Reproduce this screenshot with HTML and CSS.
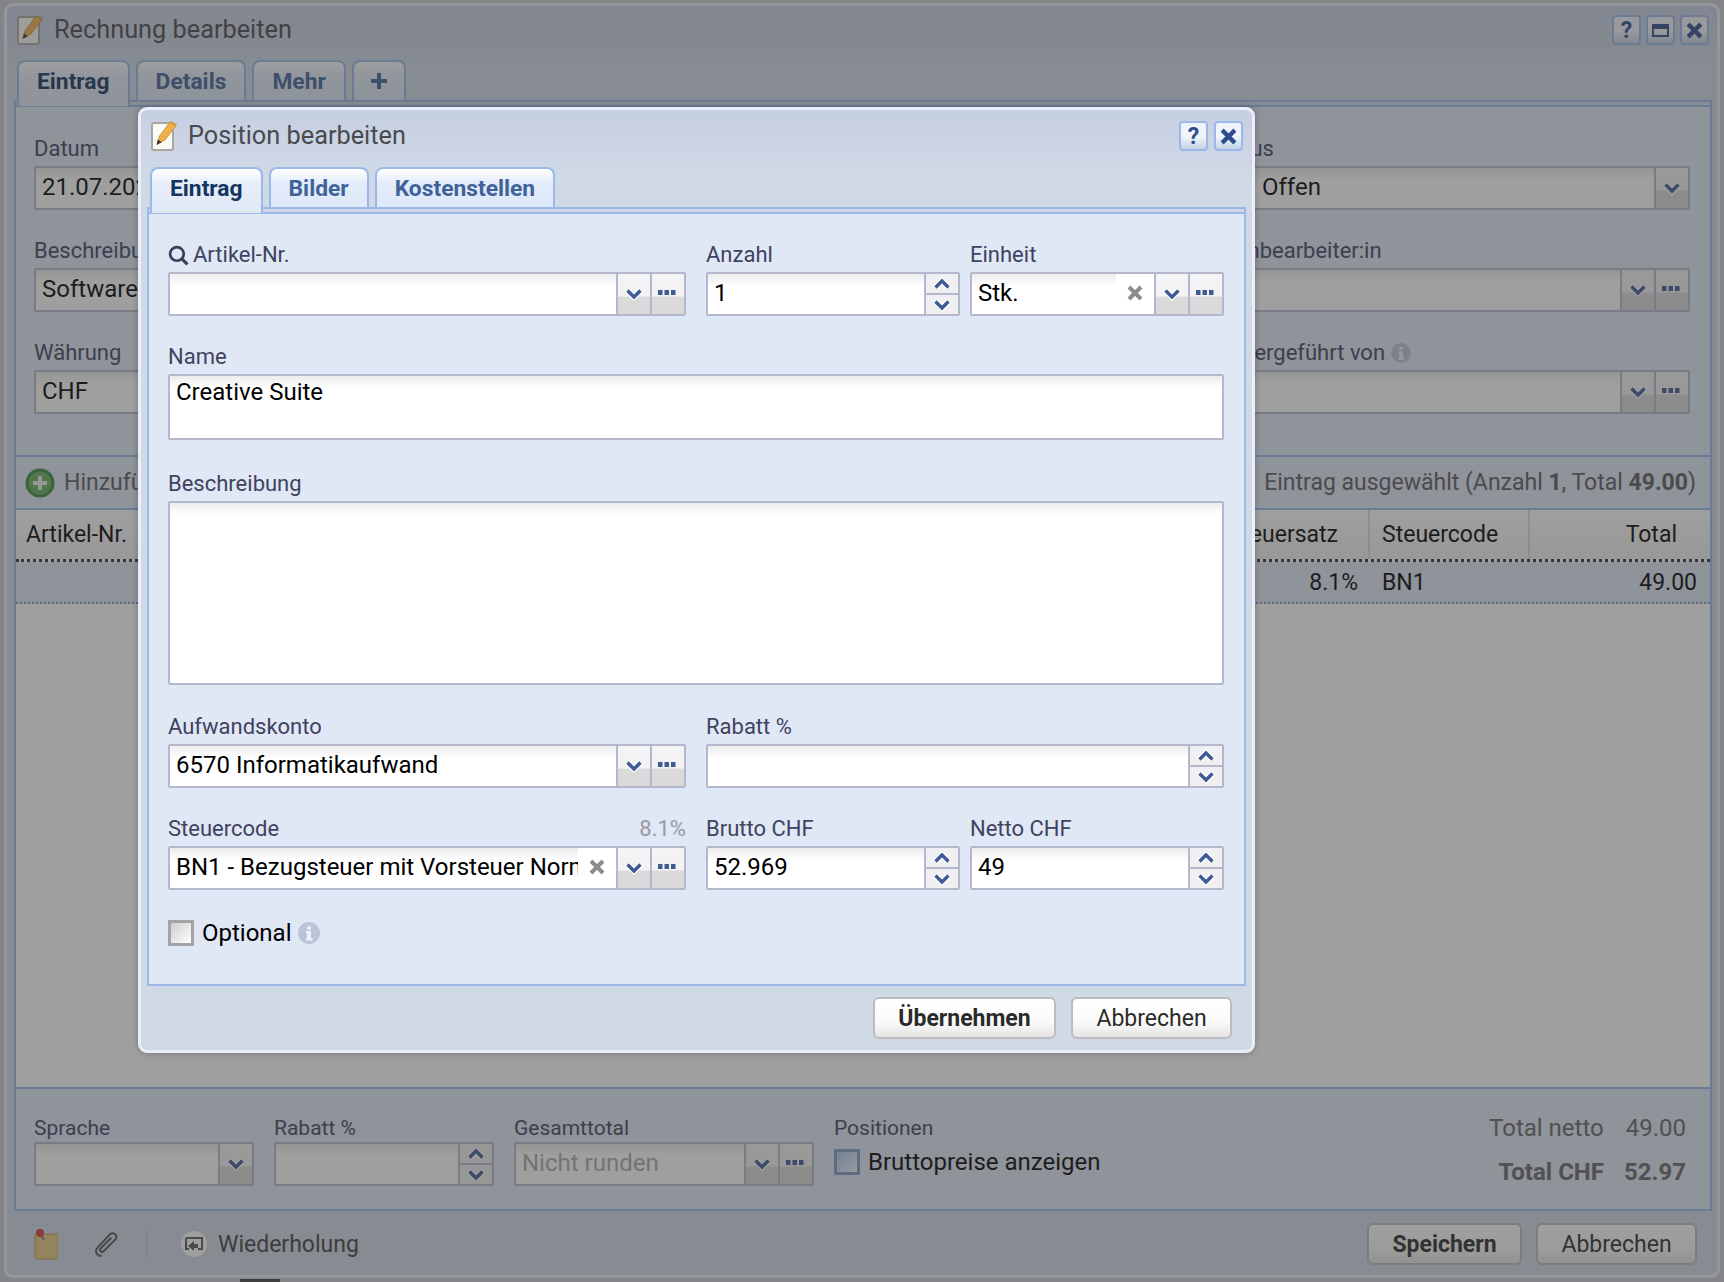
FILE: index.html
```html
<!DOCTYPE html>
<html lang="de">
<head>
    <meta charset="UTF-8">
    <title>Position bearbeiten</title>
    <link rel="stylesheet" href="styles.css">
</head>
<body>
    <svg class="sprites" width="0" height="0">
        <symbol id="i-down" viewBox="0 0 20 16"><path d="M3 4l7 7 7-7" fill="none" stroke="#fff" stroke-width="6"/><path d="M3.5 4.5l6.500 6.500 6.500-6.500" fill="none" stroke="#3f5a96" stroke-width="3.400"/></symbol>
        <symbol id="i-up" viewBox="0 0 20 16"><path d="M3 12l7-7 7 7" fill="none" stroke="#fff" stroke-width="6"/><path d="M3.500 11.500l6.500-6.500 6.500 6.500" fill="none" stroke="#3f5a96" stroke-width="3.400"/></symbol>
        <symbol id="i-more" viewBox="0 0 18 6"><path d="M0 0h4.500v5H0zM6.500 0H11v5H6.500zM13 0h4.500v5H13z" fill="#3f5a96"/></symbol>
        <symbol id="i-x" viewBox="0 0 16 16"><path d="M2 2l12 12M14 2L2 14" fill="none" stroke="currentColor" stroke-width="4"/></symbol>
        <symbol id="i-note" viewBox="0 0 26 30">
            <rect x="1" y="2" width="21" height="27" rx="2" fill="#fbfbf8" stroke="#a9a89f" stroke-width="2"/>
            <path d="M6 23l2.500-8L19 1l6 4L14 19z" fill="#eeb14a" stroke="#c98a2c" stroke-width=".8"/>
            <path d="M19 1l1.500-1L26 3l-1 2z" fill="#c9a15a"/>
            <path d="M5.500 24l1.300-5.500 4 2.700z" fill="#40382c"/>
        </symbol>
        <symbol id="i-info" viewBox="0 0 22 22"><circle cx="11" cy="11" r="11" fill="#bcc4d8"/><path d="M9 4.500h4v3H9zM8 9h5v7h1.500v2.500h-6.500V16H9v-4.500H8z" fill="#eef1f8"/></symbol>
    </svg>

    <!-- Hintergrundfenster -->
    <div class="window invoice">
        <div class="title-bar">
            <svg class="title-icon"><use href="#i-note"/></svg>
            <span class="title-text">Rechnung bearbeiten</span>
            <div class="win-buttons">
                <button class="win-btn">?</button>
                <button class="win-btn"><span class="max-glyph"></span></button>
                <button class="win-btn"><svg class="x-glyph"><use href="#i-x"/></svg></button>
            </div>
        </div>
        <div class="tabs">
            <span class="tab active">Eintrag</span>
            <span class="tab">Details</span>
            <span class="tab">Mehr</span>
            <span class="tab tab-plus"><svg width="18" height="18" viewBox="0 0 18 18"><path d="M9 1v16M1 9h16" stroke="currentColor" stroke-width="4"/></svg></span>
        </div>
        <div class="tab-strip"></div>
        <div class="invoice-panel">
            <section class="head-form">
                <div class="col">
                    <label class="label">Datum</label>
                    <div class="field"><span class="value">21.07.2023</span></div>
                </div>
                <div class="col">
                    <label class="label">Status</label>
                    <div class="field"><span class="value value-status">Offen</span><span class="fbtn"><svg class="chev"><use href="#i-down"/></svg></span></div>
                </div>
                <div class="col">
                    <label class="label">Beschreibung</label>
                    <div class="field"><span class="value">Software</span></div>
                </div>
                <div class="col">
                    <label class="label">Sachbearbeiter:in</label>
                    <div class="field"><span class="value"></span><span class="fbtn"><svg class="chev"><use href="#i-down"/></svg></span><span class="fbtn"><svg class="more"><use href="#i-more"/></svg></span></div>
                </div>
                <div class="col">
                    <label class="label">Währung</label>
                    <div class="field"><span class="value">CHF</span></div>
                </div>
                <div class="col">
                    <label class="label">Weitergeführt von <svg class="info-small"><use href="#i-info"/></svg></label>
                    <div class="field"><span class="value"></span><span class="fbtn"><svg class="chev"><use href="#i-down"/></svg></span><span class="fbtn"><svg class="more"><use href="#i-more"/></svg></span></div>
                </div>
            </section>

            <div class="grid-toolbar">
                <svg class="add-icon" viewBox="0 0 30 30">
                    <circle cx="15" cy="15" r="14.500" fill="#3d8a3d"/>
                    <circle cx="15" cy="15" r="11.500" fill="#69b05e"/>
                    <path d="M15 8v14M8 15h14" stroke="#e8f3e4" stroke-width="4"/>
                </svg>
                <span class="add-text">Hinzufügen</span>
                <span class="grid-status">1 Eintrag ausgewählt (Anzahl <b>1</b>, Total <b>49.00</b>)</span>
            </div>
            <div class="grid-row grid-head">
                <span class="cell cell-main">Artikel-Nr.</span>
                <span class="cell cell-rate">Steuersatz</span>
                <span class="cell cell-code">Steuercode</span>
                <span class="cell cell-total">Total</span>
            </div>
            <div class="grid-row grid-item">
                <span class="cell cell-main"></span>
                <span class="cell cell-rate">8.1%</span>
                <span class="cell cell-code">BN1</span>
                <span class="cell cell-total">49.00</span>
            </div>
            <div class="grid-empty"></div>

            <section class="foot-form">
                <div class="foot-col w-220">
                    <label class="label">Sprache</label>
                    <div class="field"><span class="value"></span><span class="fbtn"><svg class="chev"><use href="#i-down"/></svg></span></div>
                </div>
                <div class="foot-col w-220">
                    <label class="label">Rabatt %</label>
                    <div class="field"><span class="value"></span><span class="spin"><span><svg class="chev-s"><use href="#i-up"/></svg></span><span><svg class="chev-s"><use href="#i-down"/></svg></span></span></div>
                </div>
                <div class="foot-col w-300">
                    <label class="label">Gesamttotal</label>
                    <div class="field"><span class="value value-muted">Nicht runden</span><span class="fbtn"><svg class="chev"><use href="#i-down"/></svg></span><span class="fbtn"><svg class="more"><use href="#i-more"/></svg></span></div>
                </div>
                <div class="foot-col">
                    <label class="label">Positionen</label>
                    <div class="check-row check-gross"><span class="check check-blue"></span><span class="check-text">Bruttopreise anzeigen</span></div>
                </div>
                <div class="totals">
                    <div class="total-line"><span>Total netto</span><span class="total-num">49.00</span></div>
                    <div class="total-line total-strong"><span>Total CHF</span><span class="total-num">52.97</span></div>
                </div>
            </section>
        </div>
        <div class="invoice-footer">
            <svg class="tool-note" viewBox="0 0 24 32">
                <rect x="1" y="6" width="23" height="25" rx="1" fill="#eacb7d" stroke="#b99c55"/>
                <path d="M6 6l4 6" stroke="#777" stroke-width="2"/>
                <circle cx="6" cy="5" r="4" fill="#d83a3a"/>
            </svg>
            <svg class="tool-clip" viewBox="0 0 28 28"><path d="M9 26c-5 0-8-5-4-9L17 4c4-4 10 1 6 5L11 21c-2 2-5-1-3-3L19 7" fill="none" stroke="#4e5158" stroke-width="2"/></svg>
            <span class="tool-sep"></span>
            <svg class="tool-repeat" viewBox="0 0 26 26">
                <circle cx="13" cy="13" r="13" fill="#ffffff"/>
                <path d="M5 7h16v11h-4M5 7v11h3" fill="none" stroke="#5a5a5a" stroke-width="2"/>
                <path d="M17 13h-4v-3l-6 5 6 5v-3h4z" fill="#5a5a5a"/>
            </svg>
            <span class="tool-text">Wiederholung</span>
            <div class="btn-group">
                <button class="btn btn-strong btn-save">Speichern</button>
                <button class="btn btn-cancel-main">Abbrechen</button>
            </div>
        </div>
    </div>
    <div class="desk-tab"></div>

    <div class="mask"></div>

    <!-- Dialog -->
    <div class="window dialog">
        <div class="title-bar">
            <svg class="title-icon"><use href="#i-note"/></svg>
            <span class="title-text">Position bearbeiten</span>
            <div class="win-buttons">
                <button class="win-btn">?</button>
                <button class="win-btn"><svg class="x-glyph"><use href="#i-x"/></svg></button>
            </div>
        </div>
        <div class="tabs">
            <span class="tab active">Eintrag</span>
            <span class="tab">Bilder</span>
            <span class="tab">Kostenstellen</span>
        </div>
        <div class="tab-strip"></div>
        <div class="dialog-panel">
            <div class="row">
                <div class="col">
                    <label class="label"><svg class="search" viewBox="0 0 20 20"><circle cx="8.500" cy="8.500" r="6.500" fill="none" stroke="#3a3f5e" stroke-width="2.600"/><path d="M13 13l5.500 5.500" stroke="#3a3f5e" stroke-width="3"/></svg>Artikel-Nr.</label>
                    <div class="field"><span class="value"></span><span class="fbtn"><svg class="chev"><use href="#i-down"/></svg></span><span class="fbtn"><svg class="more"><use href="#i-more"/></svg></span></div>
                </div>
                <div class="col pair">
                    <div class="col">
                        <label class="label">Anzahl</label>
                        <div class="field"><span class="value">1</span><span class="spin"><span><svg class="chev-s"><use href="#i-up"/></svg></span><span><svg class="chev-s"><use href="#i-down"/></svg></span></span></div>
                    </div>
                    <div class="col">
                        <label class="label">Einheit</label>
                        <div class="field"><span class="value">Stk.</span><span class="clear"><svg class="x-clear"><use href="#i-x"/></svg></span><span class="fbtn"><svg class="chev"><use href="#i-down"/></svg></span><span class="fbtn"><svg class="more"><use href="#i-more"/></svg></span></div>
                    </div>
                </div>
            </div>

            <div class="row row-name">
                <div class="col">
                    <label class="label">Name</label>
                    <div class="field area area-name"><span class="value">Creative Suite</span></div>
                </div>
            </div>

            <div class="row row-desc">
                <div class="col">
                    <label class="label">Beschreibung</label>
                    <div class="field area area-desc"><span class="value"></span></div>
                </div>
            </div>

            <div class="row">
                <div class="col">
                    <label class="label">Aufwandskonto</label>
                    <div class="field"><span class="value">6570 Informatikaufwand</span><span class="fbtn"><svg class="chev"><use href="#i-down"/></svg></span><span class="fbtn"><svg class="more"><use href="#i-more"/></svg></span></div>
                </div>
                <div class="col">
                    <label class="label">Rabatt %</label>
                    <div class="field"><span class="value"></span><span class="spin"><span><svg class="chev-s"><use href="#i-up"/></svg></span><span><svg class="chev-s"><use href="#i-down"/></svg></span></span></div>
                </div>
            </div>

            <div class="row">
                <div class="col">
                    <label class="label label-split"><span>Steuercode</span><span class="label-hint">8.1%</span></label>
                    <div class="field"><span class="value">BN1 - Bezugsteuer mit Vorsteuer Normalsatz</span><span class="clear"><svg class="x-clear"><use href="#i-x"/></svg></span><span class="fbtn"><svg class="chev"><use href="#i-down"/></svg></span><span class="fbtn"><svg class="more"><use href="#i-more"/></svg></span></div>
                </div>
                <div class="col pair">
                    <div class="col">
                        <label class="label">Brutto CHF</label>
                        <div class="field"><span class="value">52.969</span><span class="spin"><span><svg class="chev-s"><use href="#i-up"/></svg></span><span><svg class="chev-s"><use href="#i-down"/></svg></span></span></div>
                    </div>
                    <div class="col">
                        <label class="label">Netto CHF</label>
                        <div class="field"><span class="value">49</span><span class="spin"><span><svg class="chev-s"><use href="#i-up"/></svg></span><span><svg class="chev-s"><use href="#i-down"/></svg></span></span></div>
                    </div>
                </div>
            </div>

            <div class="check-row check-optional">
                <span class="check"></span>
                <span class="check-text">Optional</span>
                <svg class="info"><use href="#i-info"/></svg>
            </div>
        </div>
        <div class="dialog-footer">
            <button class="btn btn-strong btn-apply">Übernehmen</button>
            <button class="btn btn-cancel">Abbrechen</button>
        </div>
    </div>
</body>
</html>
```

FILE: styles.css
```css
* {
    margin: 0;
    padding: 0;
    box-sizing: border-box;
}
html, body {
    height: 1282px;
    overflow: hidden;
}
body {
    position: relative;
    font-family: Roboto, "Noto Sans", sans-serif;
    font-size: 24px;
    color: #000;
    background-color: #c6cad2;
}
.sprites {
    position: absolute;
}
button {
    font-family: inherit;
}

/* windows */
.window {
    position: absolute;
    display: flex;
    flex-direction: column;
    padding: 0 6px;
    border: 3px solid #e9eefa;
    border-radius: 9px;
    background: linear-gradient(#c5cfe2, #d0dae6 70px);
}
.invoice {
    left: 4px;
    top: 3px;
    width: 1716px;
    height: 1275px;
    padding: 0 5px 0 7px;
}
.dialog {
    left: 138px;
    top: 107px;
    width: 1117px;
    height: 946px;
    z-index: 3;
    box-shadow: 0 0 6px rgba(0, 0, 0, 0.25);
}
.mask {
    position: absolute;
    left: 0;
    top: 0;
    width: 100%;
    height: 100%;
    z-index: 2;
    background-color: rgba(60, 60, 60, 0.49);
}
.desk-tab {
    position: absolute;
    left: 240px;
    bottom: 0;
    width: 40px;
    height: 3px;
    background-color: #444;
}

.title-bar {
    display: flex;
    align-items: center;
    height: 57px;
    padding-bottom: 8px;
}
.invoice .title-bar {
    height: 54px;
    padding-bottom: 8px;
}
.title-icon {
    width: 26px;
    height: 30px;
    margin-top: 2px;
    margin-left: 4px;
}
.invoice .title-icon {
    margin-left: 3px;
}
.title-text {
    margin-top: 2px;
    margin-left: 11px;
    font-size: 25.300px;
    color: #4a4a4e;
}
.invoice .title-text {
    margin-top: 0;
}
.win-buttons {
    display: flex;
    gap: 6px;
    margin-left: auto;
    margin-top: 3px;
    margin-right: 3px;
}
.invoice .win-buttons {
    gap: 5px;
    margin-top: 2px;
}
.win-btn {
    display: flex;
    align-items: center;
    justify-content: center;
    width: 29px;
    height: 30px;
    border: 2px solid #9cb8ea;
    border-radius: 4px;
    background: linear-gradient(#eef3fb, #f2f6fc 50%, #c4d3e8);
    font-size: 23px;
    font-weight: 700;
    color: #2f4c8c;
}
.x-glyph {
    width: 17px;
    height: 17px;
    color: #2f4c8c;
}
.max-glyph {
    width: 17px;
    height: 13px;
    border: 2px solid #2f4c8c;
    border-top-width: 5px;
}

/* tabs */
.tabs {
    display: flex;
    gap: 6px;
    padding-left: 3px;
    height: 40px;
    position: relative;
    z-index: 1;
}
.tab {
    display: flex;
    align-items: center;
    justify-content: center;
    height: 40px;
    padding: 0 18px;
    border: 2px solid #9cb8ea;
    border-bottom: 0;
    border-radius: 8px 8px 0 0;
    background: linear-gradient(#ffffff, #e3ecfa 14px, #dde8f8);
    font-size: 22.800px;
    font-weight: 700;
    color: #3f6299;
}
.tab.active {
    height: 46px;
    padding-bottom: 6px;
    background: linear-gradient(#ffffff, #e6eefb 14px, #e0e7f5);
    color: #15355f;
}
.tab-plus {
    padding: 0 16px;
}
.tab-strip {
    height: 7px;
    border-top: 2px solid #9cb8ea;
    border-bottom: 2px solid #9cb8ea;
    border-left: 2px solid #9cb8ea;
    border-right: 2px solid #9cb8ea;
}

/* form bits */
.label {
    display: block;
    height: 28px;
    font-size: 22px;
    line-height: 22px;
    color: #3f4260;
    white-space: nowrap;
}
.label-split {
    display: flex;
    justify-content: space-between;
}
.label-hint {
    color: #9a9aa2;
}
.search {
    width: 21px;
    height: 21px;
    margin-right: 4px;
    vertical-align: -4px;
}
.field {
    display: flex;
    height: 44px;
    border: 2px solid #b4b8cc;
    border-radius: 2px;
    background: linear-gradient(#ececec, #ffffff 12px);
}
.value {
    flex: 1;
    min-width: 0;
    padding: 0 6px;
    line-height: 39px;
    white-space: nowrap;
    overflow: hidden;
}
.fbtn {
    display: flex;
    align-items: center;
    justify-content: center;
    flex: none;
    width: 34px;
    border-left: 2px solid #b4b8cc;
    background: linear-gradient(#f4f4f4, #f2f2f2 55%, #dadada 58%);
}
.chev {
    width: 20px;
    height: 16px;
    margin-right: 1px;
}
.more {
    width: 18px;
    height: 6px;
    margin-top: -3px;
    margin-right: 3px;
}
.spin {
    display: flex;
    flex-direction: column;
    flex: none;
    width: 34px;
    border-left: 2px solid #b4b8cc;
}
.spin span {
    display: flex;
    align-items: center;
    justify-content: center;
    flex: 1;
    background-color: #f0f0f2;
}
.spin span + span {
    border-top: 2px solid #b4b8cc;
}
.chev-s {
    width: 20px;
    height: 16px;
}
.clear {
    display: flex;
    align-items: center;
    justify-content: center;
    flex: none;
    width: 38px;
    background-color: #fff;
}
.x-clear {
    width: 16px;
    height: 16px;
    margin-top: -2px;
    color: #8c8c8c;
}
.check-row {
    display: flex;
    align-items: center;
}
.check {
    flex: none;
    width: 26px;
    height: 26px;
    border: 3px solid #a3a3a8;
    background: linear-gradient(135deg, #cfcfcf, #ffffff);
}
.check-text {
    margin-left: 8px;
    line-height: 26px;
}

/* dialog */
.dialog-panel {
    flex: 1;
    padding: 30px 20px 0 19px;
    border: 2px solid #9cb8ea;
    border-top: 0;
    background-color: #e0e7f5;
}
.row {
    display: flex;
    gap: 20px;
    margin-bottom: 30px;
}
.row-name {
    margin-bottom: 33px;
}
.row-desc {
    margin-bottom: 31px;
}
.col {
    flex: 1;
    min-width: 0;
}
.pair {
    display: flex;
    gap: 10px;
}
.area {
    align-items: flex-start;
}
.area .value {
    line-height: 33px;
}
.area-name {
    height: 66px;
}
.area-desc {
    height: 184px;
}
.check-optional {
    margin-top: 2px;
}
.info {
    width: 22px;
    height: 22px;
    margin-left: 6px;
}
.dialog-footer {
    display: flex;
    justify-content: flex-end;
    gap: 15px;
    height: 64px;
    padding: 11px 14px 0 0;
}
.btn {
    height: 42px;
    border: 2px solid #bcbcbc;
    border-radius: 6px;
    background: linear-gradient(#ffffff, #fafafa 60%, #e4e4e4);
    font-size: 23px;
    color: #2a2a2a;
}
.btn-strong {
    font-weight: 700;
}
.btn-apply {
    width: 183px;
}
.btn-cancel {
    width: 161px;
}

/* invoice window */
.invoice-panel {
    flex: 1;
    display: flex;
    flex-direction: column;
    border: 2px solid #9cb8ea;
    border-top: 0;
    background-color: #e0e7f5;
}
.head-form {
    display: grid;
    grid-template-columns: 1fr 479px;
    gap: 30px 20px;
    align-content: start;
    height: 348px;
    padding: 31px 20px 0 18px;
}
.value-status {
    padding-left: 49px;
}
.info-small {
    width: 20px;
    height: 20px;
    vertical-align: -3px;
}
.grid-toolbar {
    display: flex;
    align-items: center;
    height: 55px;
    padding: 0 14px 0 9px;
    border-top: 2px solid #9cb8ea;
    border-bottom: 2px solid #9cb8ea;
    font-size: 23px;
    color: #5a5a5e;
}
.add-icon {
    width: 30px;
    height: 30px;
}
.add-text {
    margin-left: 9px;
}
.grid-status {
    margin-left: auto;
}
.grid-status b {
    font-weight: 700;
}
.grid-row {
    display: flex;
    align-items: center;
    font-size: 23px;
}
.grid-head {
    height: 52px;
    border-bottom: 3px dotted #333;
    background: linear-gradient(#ffffff, #f2f2f2);
}
.grid-head .cell {
    height: 100%;
    line-height: 50px;
    border-right: 2px solid #dcdcdc;
}
.grid-item {
    height: 42px;
    border-bottom: 2px dotted #7d96c8;
}
.cell {
    flex: none;
    padding: 0 12px;
}
.cell-main {
    flex: 1;
    padding-left: 10px;
}
.cell-rate {
    width: 200px;
    text-align: right;
}
.grid-head .cell-rate {
    padding-right: 30px;
}
.cell-code {
    width: 160px;
    padding-left: 12px;
}
.cell-total {
    width: 180px;
    padding-right: 13px;
    text-align: right;
}
.grid-head .cell-total {
    padding-right: 33px;
    border-right: 0;
}
.grid-empty {
    flex: 1;
    background-color: #fff;
}
.foot-form {
    display: flex;
    gap: 20px;
    height: 122px;
    padding: 26px 24px 0 18px;
    border-top: 2px solid #9cb8ea;
}
.foot-form .label {
    height: 27px;
    font-size: 21px;
    line-height: 26px;
}
.w-220 {
    width: 220px;
}
.w-300 {
    width: 300px;
}
.value-muted {
    color: #aaa;
}
.check-gross {
    margin-top: 7px;
}
.check-blue {
    border-color: #7f9bc7;
    background: linear-gradient(135deg, #a9c6ec, #f3f6fb);
}
.totals {
    margin-left: auto;
    margin-top: -1px;
    color: #666;
}
.total-line {
    display: flex;
    justify-content: flex-end;
    gap: 22px;
    height: 44px;
}
.total-strong {
    gap: 20px;
    font-weight: 700;
}
.invoice-footer {
    display: flex;
    align-items: center;
    height: 64px;
    padding-top: 2px;
    color: #3f3f42;
    font-size: 23px;
}
.tool-note {
    width: 24px;
    height: 32px;
    margin-left: 20px;
}
.tool-clip {
    width: 27px;
    height: 27px;
    margin-left: 35px;
}
.tool-sep {
    width: 2px;
    height: 28px;
    margin-left: 26px;
    background-color: #c0c8d4;
}
.tool-repeat {
    width: 26px;
    height: 26px;
    margin-left: 33px;
}
.tool-text {
    margin-left: 11px;
}
.btn-group {
    display: flex;
    gap: 14px;
    margin-left: auto;
    margin-right: 15px;
}
.btn-save {
    width: 155px;
}
.btn-cancel-main {
    width: 161px;
}
```
